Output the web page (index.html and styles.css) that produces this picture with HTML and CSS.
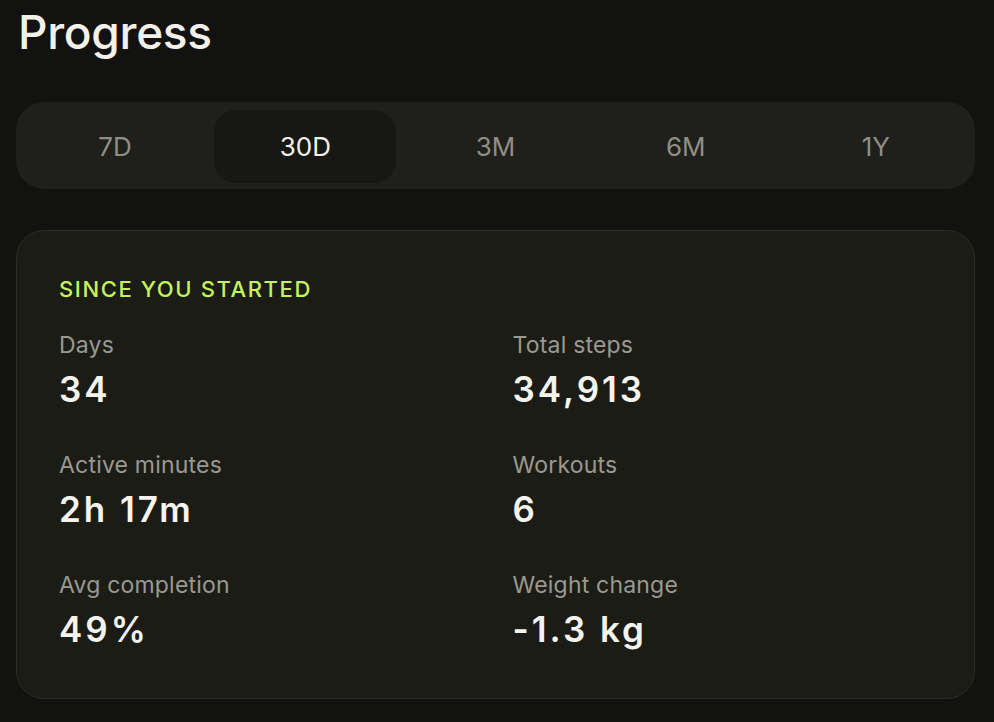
FILE: index.html
```html
<!DOCTYPE html>
<html lang="en">
<head>
    <meta charset="UTF-8">
    <meta name="viewport" content="width=device-width, initial-scale=1.0">
    <title>Progress</title>
    <link rel="stylesheet" href="styles.css">
</head>
<body>
    <div class="page">
        <h1>Progress</h1>

        <div class="range-tabs">
            <button class="tab">7D</button>
            <button class="tab active">30D</button>
            <button class="tab">3M</button>
            <button class="tab">6M</button>
            <button class="tab">1Y</button>
        </div>

        <div class="card">
            <div class="card-title">SINCE YOU STARTED</div>
            <div class="stats">
                <div class="stat">
                    <div class="stat-label">Days</div>
                    <div class="stat-value">34</div>
                </div>
                <div class="stat">
                    <div class="stat-label">Total steps</div>
                    <div class="stat-value">34,913</div>
                </div>
                <div class="stat">
                    <div class="stat-label">Active minutes</div>
                    <div class="stat-value">2h 17m</div>
                </div>
                <div class="stat">
                    <div class="stat-label">Workouts</div>
                    <div class="stat-value">6</div>
                </div>
                <div class="stat">
                    <div class="stat-label">Avg completion</div>
                    <div class="stat-value">49%</div>
                </div>
                <div class="stat">
                    <div class="stat-label">Weight change</div>
                    <div class="stat-value">-1.3 kg</div>
                </div>
            </div>
        </div>
    </div>
</body>
</html>
```

FILE: styles.css
```css
body {
    margin: 0;
    background-color: #121211;
    font-family: Inter, "Noto Sans", sans-serif;
    color: #f3f1ea;
}

.page {
    padding: 0 19px 0 16px;
}

h1 {
    margin: 0;
    padding: 4px 0 0 2px;
    font-size: 46px;
    font-weight: 500;
    line-height: 56px;
    letter-spacing: -0.3px;
    color: #f3f1ea;
}

.range-tabs {
    display: flex;
    gap: 8px;
    margin-top: 42px;
    padding: 8px 8px 6px;
    background-color: #1f1f1b;
    border-radius: 28px;
}

.tab {
    flex: 1;
    height: 73px;
    border: none;
    border-radius: 22px;
    background: none;
    font-family: Inter, "Noto Sans", sans-serif;
    font-size: 26px;
    color: #8f8e87;
    cursor: pointer;
}

.tab.active {
    background-color: #171714;
    color: #f3f1ea;
}

.card {
    margin-top: 41px;
    padding: 44px 42px 49px 42px;
    background-color: #1c1c17;
    border: 1px solid #2b2b27;
    border-radius: 28px;
}

.card-title {
    font-size: 22px;
    font-weight: 500;
    letter-spacing: 1.6px;
    line-height: 28px;
    color: #c6f25c;
}

.stats {
    display: grid;
    grid-template-columns: 1fr 1fr;
    column-gap: 34px;
    row-gap: 42px;
    margin-top: 28px;
}

.stat-label {
    font-size: 23px;
    line-height: 28px;
    letter-spacing: 0.2px;
    color: #9a9990;
}

.stat-value {
    margin-top: 10px;
    font-size: 35px;
    font-weight: 600;
    line-height: 40px;
    letter-spacing: 3px;
    color: #f5f3ed;
}
```
